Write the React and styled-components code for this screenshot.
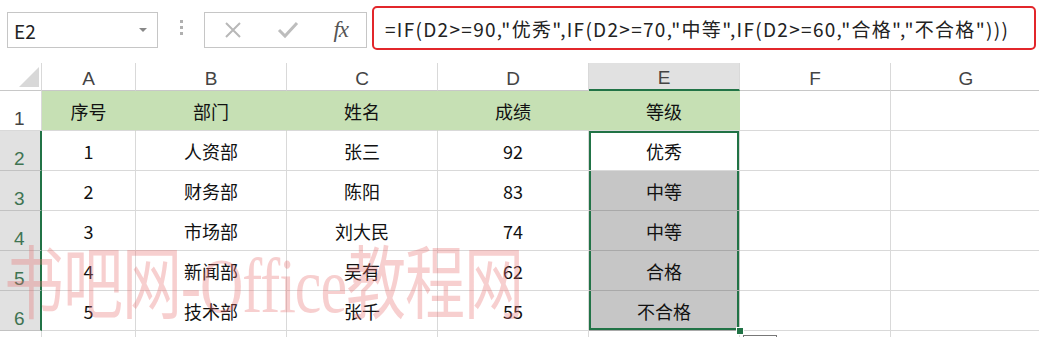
import React from 'react';
import styled, { createGlobalStyle } from 'styled-components';

const GlobalStyle = createGlobalStyle`
  html, body {
    margin: 0;
    padding: 0;
    background: #fff;
    overflow: hidden;
  }
  body {
    font-family: "Noto Sans CJK SC", "Liberation Sans", sans-serif;
    color: #111;
  }
`;

const GREEN = '#217346';
const GRID = '#d9d9d9';

const Page = styled.div`
  position: relative;
  width: 1039px;
  height: 337px;
  overflow: hidden;
`;

const Toolbar = styled.div`
  height: 63px;
  display: flex;
  align-items: flex-start;
  box-sizing: border-box;
`;

const NameBox = styled.div`
  margin: 12px 0 0 7px;
  width: 151px;
  height: 36px;
  box-sizing: border-box;
  border: 1px solid #c6c6c6;
  display: flex;
  align-items: center;
  justify-content: space-between;
  padding: 0 10px 0 6px;
  font-family: "Noto Sans CJK SC", sans-serif;
  font-size: 19px;
  color: #222;
`;

const Caret = styled.span`
  width: 0;
  height: 0;
  border-left: 4px solid transparent;
  border-right: 4px solid transparent;
  border-top: 4px solid #888;
`;

const Dots = styled.div`
  margin: 20px 0 0 0;
  width: 46px;
  display: flex;
  flex-direction: column;
  align-items: center;
  gap: 3px;
  & span {
    width: 3px;
    height: 3px;
    background: #b0b0b0;
  }
`;

const FxBox = styled.div`
  margin-top: 12px;
  width: 163px;
  height: 36px;
  box-sizing: border-box;
  border: 1px solid #c6c6c6;
  display: flex;
  align-items: center;
  justify-content: space-between;
  padding: 0 18px 0 18px;
`;

const Fx = styled.span`
  font-family: "Liberation Serif", serif;
  font-style: italic;
  font-size: 23px;
  color: #555;
  letter-spacing: -1px;
`;

const FormulaBox = styled.div`
  margin: 6px 0 0 5px;
  width: 664px;
  height: 44px;
  box-sizing: border-box;
  border: 2px solid #e2262b;
  border-radius: 5px;
  display: flex;
  align-items: center;
  padding-left: 11px;
  font-family: "Noto Sans CJK SC", sans-serif;
  font-size: 19px;
  letter-spacing: 1.3px;
  color: #222;
  white-space: nowrap;
`;

const Sheet = styled.div`
  display: grid;
  grid-template-columns: 42px 94px repeat(6, 151px);
  grid-template-rows: 28px repeat(6, 40px) 10px;
`;

const Corner = styled.div`
  border-right: 1px solid ${GRID};
  border-bottom: 1px solid #c8c8c8;
  display: flex;
  justify-content: flex-end;
  align-items: flex-end;
  padding: 0 2px 3px 0;
  &::after {
    content: '';
    width: 0;
    height: 0;
    border-style: solid;
    border-width: 0 0 20px 20px;
    border-color: transparent transparent #d8d8d8 transparent;
  }
`;

const ColHead = styled.div`
  box-sizing: border-box;
  border-right: 1px solid ${GRID};
  border-bottom: ${({ $sel }) => ($sel ? `2px solid ${GREEN}` : '1px solid #c8c8c8')};
  background: ${({ $sel }) => ($sel ? '#e1e1e1' : '#fff')};
  display: flex;
  align-items: center;
  justify-content: center;
  font-family: "Liberation Sans", sans-serif;
  font-size: 19px;
  color: #444;
  padding-top: 4px;
`;

const RowHead = styled.div`
  box-sizing: border-box;
  border-right: ${({ $sel }) => ($sel ? `2px solid ${GREEN}` : `1px solid ${GRID}`)};
  border-bottom: 1px solid ${({ $sel }) => ($sel ? '#c2c2c2' : GRID)};
  background: ${({ $sel }) => ($sel ? '#e1e1e1' : '#fff')};
  color: ${({ $sel }) => ($sel ? '#3f7452' : '#444')};
  display: flex;
  align-items: flex-end;
  padding: 0 0 0 14px;
  font-family: "Liberation Sans", sans-serif;
  font-size: 19px;
  line-height: 1;
  padding-bottom: 2px;
`;

const Cell = styled.div`
  position: relative;
  box-sizing: border-box;
  border-right: 1px solid ${({ $head, $shade }) => ($head ? '#c6e0b4' : $shade ? '#c6c6c6' : GRID)};
  border-bottom: 1px solid ${({ $shade }) => ($shade ? '#a9a9a9' : GRID)};
  background: ${({ $head, $shade }) => ($head ? '#c6e0b4' : $shade ? '#c6c6c6' : '#fff')};
  box-shadow: ${({ $edge }) => $edge || 'none'};
  display: flex;
  align-items: center;
  justify-content: center;
  font-size: 18px;
  color: #111;
`;

const Handle = styled.span`
  position: absolute;
  right: -5px;
  bottom: -5px;
  width: 6px;
  height: 6px;
  background: ${GREEN};
  border: 1px solid #fff;
  z-index: 2;
`;

const QuickBox = styled.span`
  position: absolute;
  left: 743px;
  top: 335px;
  width: 32px;
  height: 10px;
  border: 1px solid #777;
  background: #fff;
`;

const Watermark = styled.div`
  position: absolute;
  left: 4px;
  top: 246px;
  font-family: "Liberation Serif", "Noto Sans CJK SC", serif;
  font-size: 60px;
  line-height: 1;
  color: rgba(232, 110, 110, 0.33);
  transform: scaleY(1.32);
  transform-origin: top left;
  white-space: nowrap;
  letter-spacing: -1px;
  pointer-events: none;
`;

const cols = ['A', 'B', 'C', 'D', 'E', 'F', 'G'];
const header = ['序号', '部门', '姓名', '成绩', '等级'];
const rows = [
  ['1', '人资部', '张三', '92', '优秀'],
  ['2', '财务部', '陈阳', '83', '中等'],
  ['3', '市场部', '刘大民', '74', '中等'],
  ['4', '新闻部', '吴有', '62', '合格'],
  ['5', '技术部', '张千', '55', '不合格'],
];

const edgeFor = (i) => {
  const parts = [`inset 2px 0 0 ${GREEN}`, `inset -2px 0 0 ${GREEN}`];
  if (i === 0) parts.push(`inset 0 2px 0 ${GREEN}`);
  if (i === rows.length - 1) parts.push(`inset 0 -2px 0 ${GREEN}`);
  return parts.join(', ');
};

const Cross = () => (
  <svg width="20" height="20" viewBox="0 0 20 20">
    <path d="M3 3 L17 17 M17 3 L3 17" stroke="#b8b8b8" strokeWidth="2" fill="none" />
  </svg>
);

const Check = () => (
  <svg width="22" height="20" viewBox="0 0 22 20">
    <path d="M2 10 L8 16 L20 3" stroke="#bdbdbd" strokeWidth="3" fill="none" />
  </svg>
);

export default function App() {
  return (
    <Page>
      <GlobalStyle />
      <Toolbar>
        <NameBox>
          E2
          <Caret />
        </NameBox>
        <Dots>
          <span />
          <span />
          <span />
        </Dots>
        <FxBox>
          <Cross />
          <Check />
          <Fx>fx</Fx>
        </FxBox>
        <FormulaBox>
          =IF(D2&gt;=90,"优秀",IF(D2&gt;=70,"中等",IF(D2&gt;=60,"合格","不合格")))
        </FormulaBox>
      </Toolbar>

      <Sheet>
        <Corner />
        {cols.map((c) => (
          <ColHead key={c} $sel={c === 'E'}>
            {c}
          </ColHead>
        ))}

        <RowHead>1</RowHead>
        {header.map((h) => (
          <Cell key={h} $head>
            {h}
          </Cell>
        ))}
        <Cell />
        <Cell />

        {rows.map((r, i) => (
          <React.Fragment key={r[0]}>
            <RowHead $sel>{i + 2}</RowHead>
            {r.map((v, j) =>
              j === 4 ? (
                <Cell key={j} $shade={i > 0} $edge={edgeFor(i)}>
                  {v}
                  {i === rows.length - 1 && <Handle />}
                </Cell>
              ) : (
                <Cell key={j}>{v}</Cell>
              )
            )}
            <Cell />
            <Cell />
          </React.Fragment>
        ))}

        <RowHead />
        {cols.map((c) => (
          <Cell key={c} />
        ))}
      </Sheet>

      <QuickBox />
      <Watermark>书吧网-Office教程网</Watermark>
    </Page>
  );
}
